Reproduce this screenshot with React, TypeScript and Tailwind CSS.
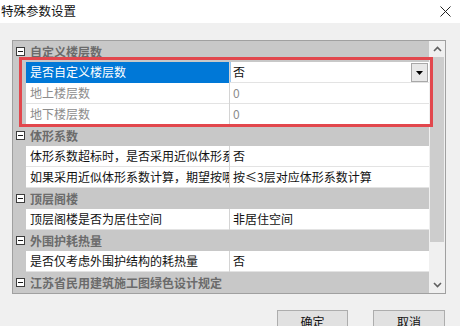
import React from "react";

// ---------------- TYPES ----------------
type Row =
  | { kind: "cat"; label: string }
  | {
      kind: "item";
      label: string;
      value: string;
      selected?: boolean;
      disabled?: boolean;
      dropdown?: boolean;
    };

// ---------------- DATA ----------------
const rows: Row[] = [
  { kind: "cat", label: "自定义楼层数" },
  { kind: "item", label: "是否自定义楼层数", value: "否", selected: true, dropdown: true },
  { kind: "item", label: "地上楼层数", value: "0", disabled: true },
  { kind: "item", label: "地下楼层数", value: "0", disabled: true },
  { kind: "cat", label: "体形系数" },
  { kind: "item", label: "体形系数超标时，是否采用近似体形系数", value: "否" },
  { kind: "item", label: "如果采用近似体形系数计算，期望按哪种方式", value: "按≤3层对应体形系数计算" },
  { kind: "cat", label: "顶层阁楼" },
  { kind: "item", label: "顶层阁楼是否为居住空间", value: "非居住空间" },
  { kind: "cat", label: "外围护耗热量" },
  { kind: "item", label: "是否仅考虑外围护结构的耗热量", value: "否" },
  { kind: "cat", label: "江苏省民用建筑施工图绿色设计规定" },
];

const MinusBox = () => (
  <svg width="9" height="9" viewBox="0 0 9 9" className="shrink-0">
    <rect x="0.5" y="0.5" width="8" height="8" fill="#ffffff" stroke="#3c3c3c" />
    <line x1="2" y1="4.5" x2="7" y2="4.5" stroke="#1a1a1a" />
  </svg>
);

const Chevron = ({ up }: { up?: boolean }) => (
  <svg width="9" height="6" viewBox="0 0 9 6">
    <path
      d={up ? "M1 5 L4.5 1.5 L8 5" : "M1 1 L4.5 4.5 L8 1"}
      fill="none"
      stroke="#606060"
      strokeWidth="1.6"
    />
  </svg>
);

// ---------------- GRID ROW ----------------
const GridRow: React.FC<{ row: Row }> = ({ row }) => {
  if (row.kind === "cat") {
    return (
      <div className="h-[21px] flex items-center bg-[#c8c8c8] shrink-0">
        <div className="w-[13px] flex justify-center pl-[1px] shrink-0">
          <MinusBox />
        </div>
        <span className="pl-[4px] text-[12px] font-bold text-[#6b6b6b] whitespace-nowrap leading-none">
          {row.label}
        </span>
      </div>
    );
  }

  const textColor = row.disabled ? "text-[#8c8c8c]" : "text-[#111111]";
  return (
    <div className="h-[21px] flex bg-[#c8c8c8] shrink-0">
      <div className="w-[13px] shrink-0" />
      <div
        className={
          row.selected
            ? "w-[203px] shrink-0 flex items-center bg-[#0078d7] text-white pl-[4px] overflow-hidden whitespace-nowrap text-[12px] border-b border-[#0078d7]"
            : `w-[203px] shrink-0 flex items-center bg-white ${textColor} pl-[4px] overflow-hidden whitespace-nowrap text-[12px] border-b border-[#e3e3e3]`
        }
      >
        {row.label}
      </div>
      <div className="w-[1px] bg-[#d4d4d4] shrink-0" />
      <div
        className={`flex-1 flex items-center bg-white ${textColor} pl-[3px] whitespace-nowrap text-[12px] border-b border-[#e3e3e3] relative`}
      >
        {row.selected && <div className="absolute left-0 top-0 bottom-0 w-[1px] bg-[#9cc8ef]" />}
        <span className="flex-1">{row.value}</span>
        {row.dropdown && (
          <div className="w-[17px] h-[19px] mr-[1px] bg-[#e8e8e8] border border-[#a8a8a8] flex items-center justify-center self-start mt-[1px]">
            <svg width="7" height="4" viewBox="0 0 7 4">
              <path d="M0 0 L7 0 L3.5 4 Z" fill="#000000" />
            </svg>
          </div>
        )}
      </div>
    </div>
  );
};

// ---------------- MAIN ----------------
const App: React.FC = () => {
  return (
    <div
      className="w-[460px] h-[326px] bg-[#f0f0f0] overflow-hidden relative"
      style={{ fontFamily: '"Noto Sans CJK SC", "Noto Sans", sans-serif' }}
    >
      {/* TITLE BAR */}
      <div className="h-[23px] bg-white flex items-center justify-between">
        <span className="pl-[1px] text-[12.5px] text-[#111111] leading-none">特殊参数设置</span>
        <svg width="11" height="11" viewBox="0 0 11 11" className="mr-[9px]">
          <path d="M0.5 0.5 L10.5 10.5 M10.5 0.5 L0.5 10.5" stroke="#222222" strokeWidth="1" />
        </svg>
      </div>

      {/* PROPERTY GRID */}
      <div className="ml-[12px] mt-[17px] w-[434px] border border-[#a0a0a0] flex">
        <div className="w-[416px] flex flex-col">
          {rows.map((row, i) => (
            <GridRow key={i} row={row} />
          ))}
        </div>
        <div className="w-[16px] flex flex-col bg-[#f0f0f0]">
          <div className="h-[16px] flex items-center justify-center">
            <Chevron up />
          </div>
          <div className="h-[185px] mx-[1px] bg-[#cdcdcd]" />
          <div className="flex-1" />
          <div className="h-[16px] flex items-center justify-center">
            <Chevron />
          </div>
        </div>
      </div>

      {/* BUTTONS */}
      <div className="flex justify-end gap-[25px] mt-[16px] pr-[15px]">
        <button className="w-[71px] h-[23px] bg-[#e1e1e1] border border-[#adadad] text-[12px] text-[#111111] leading-none">
          确定
        </button>
        <button className="w-[72px] h-[23px] bg-[#e1e1e1] border border-[#adadad] text-[12px] text-[#111111] leading-none">
          取消
        </button>
      </div>

      {/* ANNOTATION */}
      <div className="absolute left-[19px] top-[57px] w-[414px] h-[70px] border-[3px] border-[#e2474d] pointer-events-none" />
    </div>
  );
};

export default App;
